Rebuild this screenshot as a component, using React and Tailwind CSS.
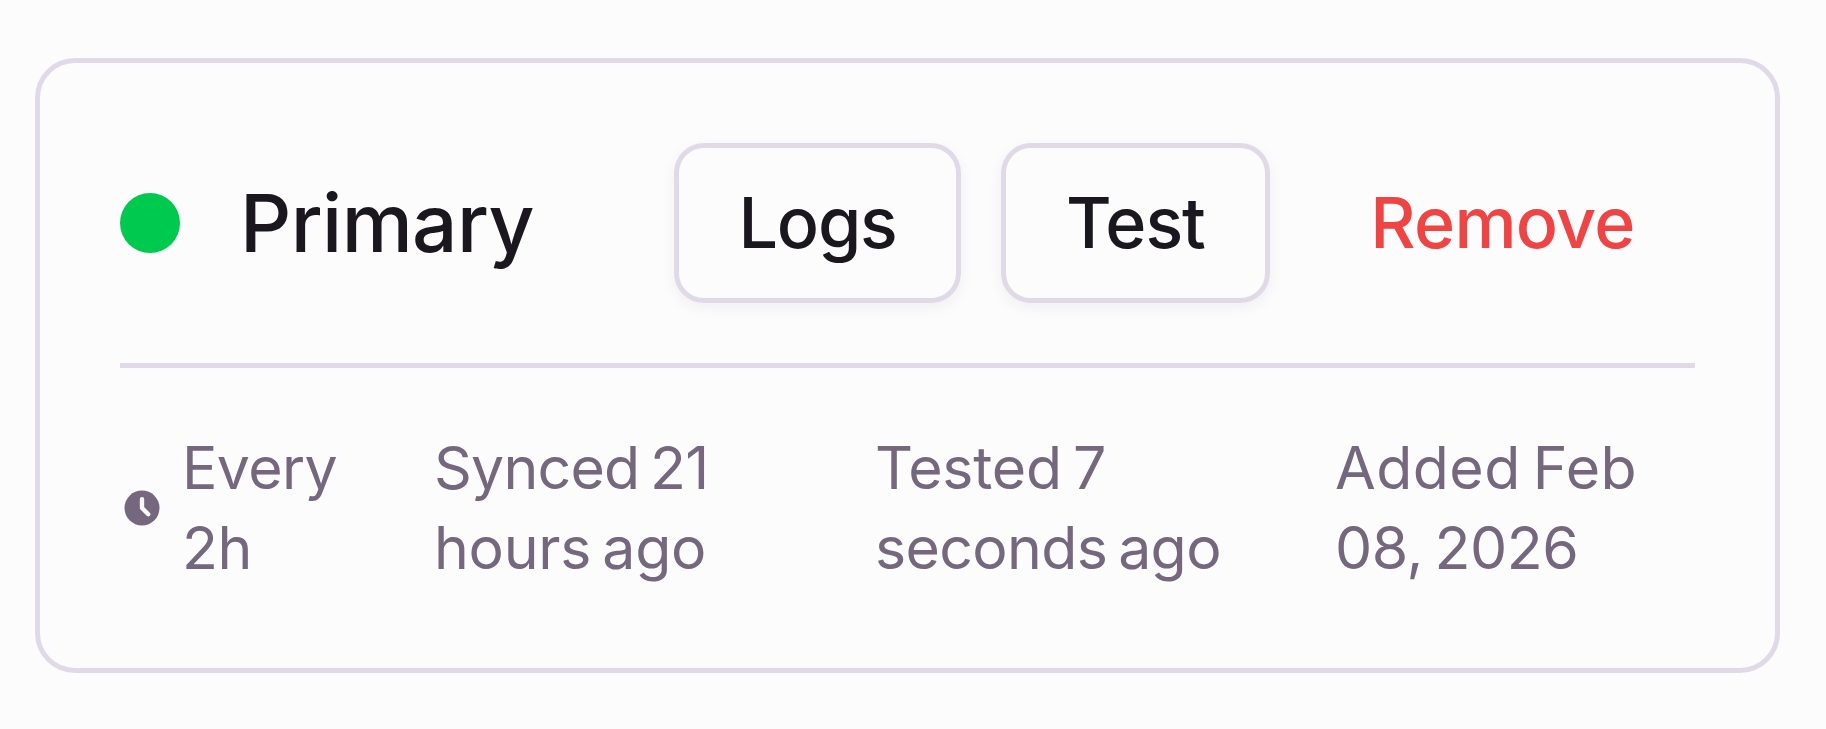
import React from 'react';

const details = [
  {
    className: 'w-[441px]',
    lines: [
      { text: 'Synced 21', tracking: 'tracking-[-0.8px]' },
      { text: 'hours ago', tracking: 'tracking-[-0.3px]' },
    ],
  },
  {
    className: 'w-[460px]',
    lines: [
      { text: 'Tested 7', tracking: 'tracking-[-0.25px]' },
      { text: 'seconds ago', tracking: 'tracking-[-0.65px]' },
    ],
  },
  {
    className: 'w-[358px]',
    lines: [
      { text: 'Added Feb', tracking: 'tracking-[0.45px]' },
      { text: '08, 2026', tracking: 'tracking-[-0.4px]' },
    ],
  },
];

const ClockIcon = () => (
  <svg viewBox="0 0 16 16" className="w-10 h-10 shrink-0" fill="none">
    <circle cx="8" cy="8" r="7" fill="#74677e" />
    <path
      d="M8 4.5V8l2.5 2.5"
      stroke="#fcfcfd"
      strokeWidth="1.75"
      strokeLinecap="round"
      strokeLinejoin="round"
    />
  </svg>
);

const App = () => {
  return (
    <div className="h-[729px] bg-[#fcfcfd] pl-[35px] pt-[58px] font-['Inter',sans-serif]">
      <div className="w-[1745px] h-[615px] rounded-[40px] border-[5px] border-[#e0dae8] p-20">
        {/* Header */}
        <div className="flex items-center h-40 text-[#1a171e] font-medium">
          <span className="w-15 h-15 rounded-full bg-[#00c950]"></span>
          <h2 className="w-[434px] ml-15 text-[80px] leading-[100px] tracking-[-0.6px]">
            Primary
          </h2>
          <div className="flex gap-10 text-[70px] leading-[100px]">
            <button className="w-[287px] h-40 rounded-[30px] border-[5px] border-[#e0dae8] tracking-[-1.2px] shadow-[0_5px_15px_0_rgba(0,0,0,0.05)]">
              Logs
            </button>
            <button className="w-[269px] h-40 rounded-[30px] border-[5px] border-[#e0dae8] tracking-[-1px] shadow-[0_5px_15px_0_rgba(0,0,0,0.05)]">
              Test
            </button>
            <button className="w-[385px] h-40 text-[#ef4444] tracking-[-0.7px]">Remove</button>
          </div>
        </div>

        {/* Sync details */}
        <div className="mt-15 border-t-[5px] border-[#e0dae8] pt-15 flex text-[59px] leading-[80px] [word-spacing:-5px] text-[#74677e]">
          <div className="w-[314px] flex items-center gap-5 pl-0.5">
            <ClockIcon />
            <span className="tracking-[-0.6px]">
              Every
              <br />
              2h
            </span>
          </div>
          {details.map(({ lines, className }) => (
            <div key={lines[0].text} className={className}>
              {lines.map(({ text, tracking }) => (
                <p key={text} className={tracking}>
                  {text}
                </p>
              ))}
            </div>
          ))}
        </div>
      </div>
    </div>
  );
};

export default App;
